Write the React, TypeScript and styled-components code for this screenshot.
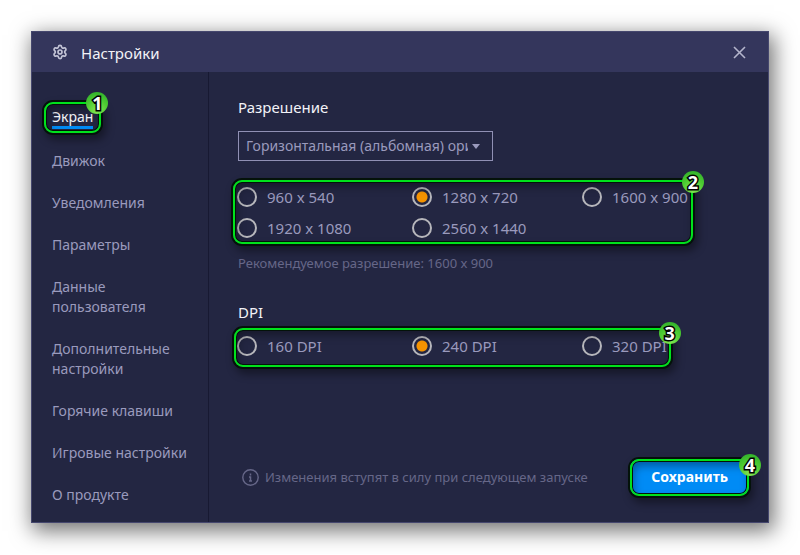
import React from "react";
import styled, { createGlobalStyle, css } from "styled-components";
import { Settings } from "lucide-react";

const GlobalStyle = createGlobalStyle`
  * { box-sizing: border-box; }
  body {
    margin: 0;
    background: #fff;
    font-family: "Noto Sans", "Open Sans", sans-serif;
    font-size: 14px;
    line-height: 20px;
  }
`;

const Page = styled.main`
  padding: 31px;
`;

const Window = styled.section`
  border: 1px solid #45476e;
  background: #232642;
  box-shadow: 3px 6px 20px 2px rgba(0, 0, 0, 0.55);
`;

const TitleBar = styled.header`
  display: flex;
  align-items: center;
  gap: 13px;
  height: 40px;
  padding: 2px 22px 0 20px;
  background: #34365c;
  color: #c3c4d6;
`;

const WindowTitle = styled.h1`
  flex: 1;
  margin: 0;
  font-size: 15px;
  font-weight: 400;
  color: #f2f2f7;
`;

const CloseButton = styled.button`
  display: flex;
  padding: 0 0 2px;
  border: 0;
  background: none;
  color: #b4b5cc;
  cursor: pointer;
`;

const GearIcon = styled(Settings)`
  margin-bottom: 3px;
`;

const Columns = styled.div`
  display: grid;
  grid-template-columns: 177px 1fr;
`;

const Sidebar = styled.nav`
  display: flex;
  flex-direction: column;
  align-items: flex-start;
  gap: 22px;
  padding: 35px 20px 17px;
  border-right: 1px solid #171932;
`;

const NavLink = styled.a<{ $active?: boolean }>`
  color: #9a9abd;
  text-decoration: none;
  ${({ $active }) =>
    $active &&
    css`
      display: block;
      border-bottom: 3px solid #008bf5;
      line-height: 19px;
      color: #f2f2f7;
    `}
`;

const Marked = styled.div`
  position: relative;
  width: fit-content;
`;

const Outline = styled.div<{ $x: number; $top: number; $bottom: number }>`
  position: absolute;
  inset: ${({ $x, $top, $bottom }) => `${-$top}px ${-$x}px ${-$bottom}px`};
  border: 2px solid #00e21c;
  border-radius: 9px;
  box-shadow:
    0 0 0 2px #04120a,
    inset 0 0 0 1px #04120a,
    inset 2px 5px 8px rgba(0, 0, 0, 0.35),
    3px 5px 8px 2px rgba(0, 0, 0, 0.4);
  pointer-events: none;
`;

const Badge = styled.span<{ $top: number; $right: number }>`
  position: absolute;
  top: ${({ $top }) => $top}px;
  right: ${({ $right }) => $right}px;
  width: 22px;
  height: 22px;
  border-radius: 50%;
  background: radial-gradient(circle at 50% 85%, #86e654 0%, #4ccb32 50%, #2aa82a 100%);
  color: #fff;
  font-size: 18px;
  font-weight: 700;
  line-height: 22px;
  text-align: center;
  -webkit-text-stroke: 3px #000;
  paint-order: stroke fill;
`;

const Content = styled.div`
  display: flex;
  flex-direction: column;
  align-items: flex-start;
  padding: 25px 19px 27px 29px;
`;

const SectionTitle = styled.h2`
  margin: 0 0 14px;
  font-size: 15px;
  font-weight: 400;
  color: #f2f2f7;
`;

const SelectBox = styled.div`
  display: grid;
  align-items: center;
  width: 255px;
  max-width: 100%;
  height: 30px;
  margin-bottom: 26px;
  padding: 0 12px 0 7px;
  border: 1px solid #9090b4;
  color: #9a9abd;

  > * {
    grid-area: 1 / 1;
  }

  svg {
    justify-self: end;
    pointer-events: none;
  }
`;

const Select = styled.select`
  appearance: none;
  width: calc(100% - 12px);
  padding: 0;
  border: 0;
  background: transparent;
  color: inherit;
  font: inherit;
  outline: none;
  text-overflow: clip;
`;

const RadioGrid = styled.div`
  display: grid;
  grid-template-columns: 175px 170px auto;
  row-gap: 11px;
  margin-left: -1px;
`;

const RadioLabel = styled.label`
  display: flex;
  align-items: center;
  gap: 10px;
  font-size: 15px;
  color: #9a9abd;
  white-space: nowrap;
`;

const Radio = styled.input`
  appearance: none;
  width: 20px;
  height: 20px;
  margin: 0;
  border: 2px solid #b7b7bc;
  border-radius: 50%;

  &:checked {
    background: radial-gradient(circle, #f59300 0 5px, transparent 6px);
  }
`;

const Hint = styled.p`
  margin: 15px 0 29px;
  font-size: 13px;
  color: #666788;
`;

const Footer = styled.footer`
  display: flex;
  align-items: center;
  justify-content: space-between;
  width: 100%;
  margin-top: auto;
  padding-left: 4px;
`;

const Notice = styled.p`
  display: flex;
  align-items: center;
  gap: 6px;
  margin: 0;
  font-size: 13px;
  color: #666788;
`;

const SaveButton = styled.button`
  display: block;
  height: 36px;
  padding: 0 21px;
  border: 0;
  border-radius: 8px;
  background: #008bf5;
  color: #fff;
  font: inherit;
  font-weight: 700;
`;

type MarkProps = { n: number; x: number; top: number; bottom: number; badgeTop: number; badgeRight: number };

function Mark({ n, x, top, bottom, badgeTop, badgeRight }: MarkProps) {
  return (
    <Outline $x={x} $top={top} $bottom={bottom}>
      <Badge $top={badgeTop} $right={badgeRight}>
        {n}
      </Badge>
    </Outline>
  );
}

function RadioGroup({ name, label, options, initial }: { name: string; label: string; options: string[]; initial: string }) {
  return (
    <RadioGrid role="radiogroup" aria-label={label}>
      {options.map((option) => (
        <RadioLabel key={option}>
          <Radio type="radio" name={name} value={option} defaultChecked={option === initial} />
          {option}
        </RadioLabel>
      ))}
    </RadioGrid>
  );
}

const sections = [
  "Движок",
  "Уведомления",
  "Параметры",
  "Данные пользователя",
  "Дополнительные настройки",
  "Горячие клавиши",
  "Игровые настройки",
  "О продукте",
];

export default function App() {
  return (
    <Page>
      <GlobalStyle />
      <Window>
        <TitleBar>
          <GearIcon size={16} strokeWidth={2.5} />
          <WindowTitle>Настройки</WindowTitle>
          <CloseButton type="button" aria-label="Закрыть">
            <svg width="13" height="13" viewBox="0 0 13 13" fill="none" stroke="currentColor" strokeWidth="1.6">
              <path d="M1 1l11 11M12 1L1 12" />
            </svg>
          </CloseButton>
        </TitleBar>
        <Columns>
          <Sidebar aria-label="Разделы">
            <Marked>
              <NavLink href="#screen" $active aria-current="page">
                Экран
              </NavLink>
              <Mark n={1} x={8} top={5} bottom={4} badgeTop={-12} badgeRight={-9} />
            </Marked>
            {sections.map((section) => (
              <NavLink key={section} href="#section">
                {section}
              </NavLink>
            ))}
          </Sidebar>
          <Content>
            <SectionTitle>Разрешение</SectionTitle>
            <SelectBox>
              <Select aria-label="Ориентация">
                <option>Горизонтальная (альбомная) ориентация</option>
              </Select>
              <svg width="8" height="5" viewBox="0 0 8 5" fill="currentColor">
                <path d="M0 0h8L4 5z" />
              </svg>
            </SelectBox>
            <Marked>
              <RadioGroup
                name="resolution"
                label="Разрешение"
                options={["960 x 540", "1280 x 720", "1600 x 900", "1920 x 1080", "2560 x 1440"]}
                initial="1280 x 720"
              />
              <Mark n={2} x={5} top={7} bottom={6} badgeTop={-11} badgeRight={-13} />
            </Marked>
            <Hint>Рекомендуемое разрешение: 1600 x 900</Hint>
            <SectionTitle>DPI</SectionTitle>
            <Marked>
              <RadioGroup name="dpi" label="DPI" options={["160 DPI", "240 DPI", "320 DPI"]} initial="240 DPI" />
              <Mark n={3} x={4} top={8} bottom={11} badgeTop={-8} badgeRight={-12} />
            </Marked>
            <Footer>
              <Notice>
                <svg width="17" height="17" viewBox="0 0 17 17" fill="none" stroke="currentColor">
                  <circle cx="8.5" cy="8.5" r="7.7" strokeWidth="1.4" />
                  <path d="M8.5 4.5v2M7 8h1.5v4M7 12h3" strokeWidth="1.5" />
                </svg>
                Изменения вступят в силу при следующем запуске
              </Notice>
              <Marked>
                <SaveButton type="button">Сохранить</SaveButton>
                <Mark n={4} x={0} top={0} bottom={1} badgeTop={-7} badgeRight={-14} />
              </Marked>
            </Footer>
          </Content>
        </Columns>
      </Window>
    </Page>
  );
}
